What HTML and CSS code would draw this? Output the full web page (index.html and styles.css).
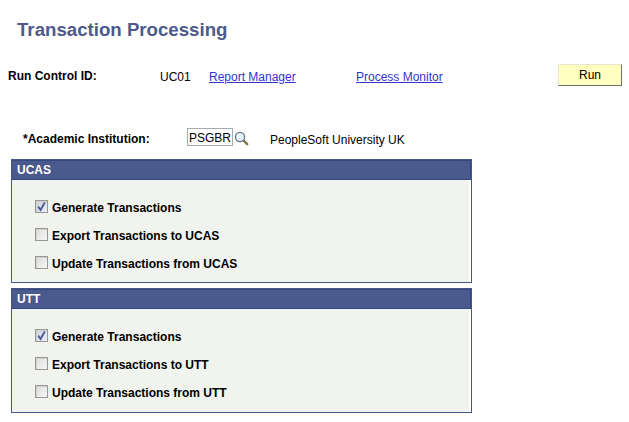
FILE: index.html
```html
<!DOCTYPE html>
<html lang="en">
<head>
<meta charset="utf-8">
<title>Transaction Processing</title>
<link rel="stylesheet" href="styles.css">
</head>
<body>
<main class="page">
  <h1 class="title">Transaction Processing</h1>
  <div class="run-row">
    <span class="label run-label">Run Control ID:</span>
    <span class="run-id">UC01</span>
    <a class="link report" href="#">Report Manager</a>
    <a class="link monitor" href="#">Process Monitor</a>
    <button class="run-btn" type="button">Run</button>
  </div>
  <div class="inst-row">
    <span class="label inst-label">*Academic Institution:</span>
    <span class="inst-input">PSGBR</span>
    <svg class="lens" width="15" height="15" viewBox="0 0 15 15" aria-hidden="true">
      <line x1="9.5" y1="9.5" x2="13.2" y2="13.2" stroke="#7d7344" stroke-width="2.4" stroke-linecap="round"/>
      <circle cx="6" cy="6" r="4.6" fill="#e6f0f6" stroke="#5f7586" stroke-width="1.3"/>
      <path d="M3.5 6a2.6 2.6 0 0 1 2.5-2.6" fill="none" stroke="#fff" stroke-width="1.1"/>
    </svg>
    <span class="inst-name">PeopleSoft University UK</span>
  </div>
  <section class="panel panel-ucas">
    <h2 class="panel-head">UCAS</h2>
    <div class="panel-body">
      <div class="check-row"><span class="box checked"><svg width="11" height="11" viewBox="0 0 11 11"><path d="M2.2 5.6 4.6 9 8.8 1.4" fill="none" stroke="#4a5a96" stroke-width="1.9"/></svg></span>Generate Transactions</div>
      <div class="check-row"><span class="box"></span>Export Transactions to UCAS</div>
      <div class="check-row"><span class="box"></span>Update Transactions from UCAS</div>
    </div>
  </section>
  <section class="panel panel-utt">
    <h2 class="panel-head">UTT</h2>
    <div class="panel-body">
      <div class="check-row"><span class="box checked"><svg width="11" height="11" viewBox="0 0 11 11"><path d="M2.2 5.6 4.6 9 8.8 1.4" fill="none" stroke="#4a5a96" stroke-width="1.9"/></svg></span>Generate Transactions</div>
      <div class="check-row"><span class="box"></span>Export Transactions to UTT</div>
      <div class="check-row"><span class="box"></span>Update Transactions from UTT</div>
    </div>
  </section>
</main>
</body>
</html>
```

FILE: styles.css
```css
html, body { margin: 0; padding: 0; background: #fff; }
body { font-family: "Liberation Sans", Arial, sans-serif; font-size: 12px; color: #000; }
.page { width: 629px; height: 422px; overflow: hidden; padding-top: 19px; box-sizing: border-box; }
.title { margin: 0 0 0 17px; font-size: 18.67px; line-height: 22px; font-weight: bold; color: #4d5a8a; }
.run-row { display: flex; align-items: flex-start; margin: 24px 0 0 8px; height: 24px; }
.label { font-weight: bold; line-height: 14px; }
.run-label { width: 152px; margin-top: 4px; }
.run-id { width: 49px; margin-top: 5px; line-height: 14px; }
.link { color: #3333cc; text-decoration: underline; line-height: 14px; margin-top: 5px; }
.report { width: 147px; }
.monitor { width: 202px; }
.run-btn { width: 64px; height: 22px; margin: -1px 0 0 0; padding: 0; font: 12px/14px "Liberation Sans", Arial, sans-serif; color: #000; background: #ffffc0; border: 1px solid; border-color: #e8e8d0 #707070 #707070 #e8e8d0; }
.inst-row { display: flex; align-items: flex-start; margin: 40px 0 0 23px; height: 20px; }
.inst-label { width: 164px; margin-top: 3px; }
.inst-input { box-sizing: border-box; width: 46px; height: 18px; margin-top: -1px; border: 1px solid #a5acb2; line-height: 18px; padding-left: 1px; background: #fff; overflow: hidden; }
.lens { margin: 2px 0 0 1px; }
.inst-name { margin: 4px 0 0 21px; line-height: 14px; }
.panel { box-sizing: border-box; width: 461px; margin-left: 11px; border: 1px solid #47568a; background: #fff; }
.panel-ucas { margin-top: 10px; height: 124px; }
.panel-utt { margin-top: 5px; height: 125px; }
.panel-head { box-sizing: border-box; height: 20px; margin: 0; padding-left: 4px; font-size: 12px; line-height: 18px; font-weight: bold; color: #fff; background: #4a5a8c; border: 1px solid #334a80; border-left-color: #47568a; }
.panel-body { box-sizing: border-box; width: 457px; height: calc(100% - 20px); padding: 14px 0 0 23px; background: #f0f3ee; }
.check-row { display: flex; align-items: center; height: 28px; font-weight: bold; }
.box { box-sizing: border-box; display: flex; align-items: center; justify-content: center; width: 13px; height: 13px; margin: 0 4px 3px 0; border: 1px solid #979797; background: linear-gradient(135deg, #dddddb, #f6f6f6); box-shadow: inset 1px 1px 0 #cfcfcf; }
.box.checked { background: linear-gradient(135deg, #ced0da, #eef0f4); }
```
